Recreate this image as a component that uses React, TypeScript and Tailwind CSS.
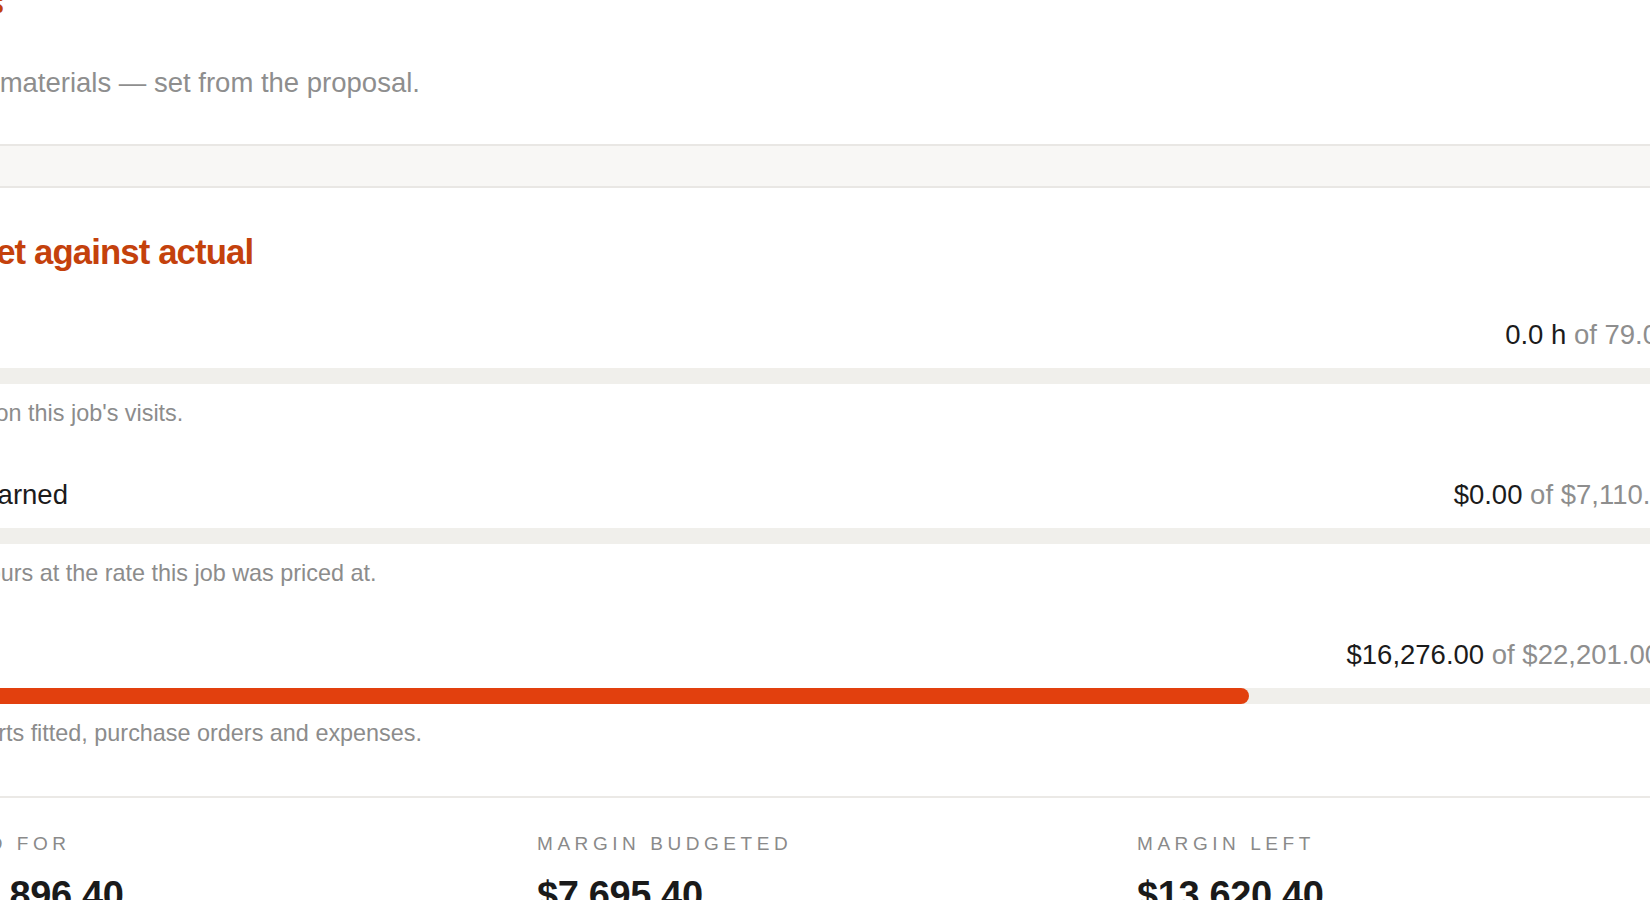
import React from "react";

type Row = {
  label: string;
  actual: string;
  budget: string;
  hint: string;
  fill: string;
  flag?: boolean;
};

const rows: Row[] = [
  {
    label: "Hours",
    actual: "0.0 h",
    budget: "79.0 h",
    hint: "Logged on this job's visits.",
    fill: "w-0",
  },
  {
    label: "Work earned",
    actual: "$0.00",
    budget: "$7,110.00",
    hint: "Billed hours at the rate this job was priced at.",
    fill: "w-0",
  },
  {
    label: "Costs",
    actual: "$16,276.00",
    budget: "$22,201.00",
    hint: "Shop parts fitted, purchase orders and expenses.",
    fill: "w-[75.6%]",
    flag: true,
  },
];

const stats = [
  { label: "SOLD FOR", value: "$29,896.40" },
  { label: "MARGIN BUDGETED", value: "$7,695.40" },
  { label: "MARGIN LEFT", value: "$13,620.40" },
];

function BudgetRow({ row }: { row: Row }) {
  return (
    <div className="flex flex-col">
      <div className="flex h-[36px] items-baseline justify-between text-[27.5px] leading-[36px]">
        <span className="text-[#1b1b1b]">{row.label}</span>
        <span className="flex items-center whitespace-nowrap">
          <span className="text-[#1b1b1b]">{row.actual}</span>
          <span className="whitespace-pre text-[#8e8e8e]"> of {row.budget}</span>
          {row.flag ? <span className="ml-[12px] h-[9px] w-[9px] rounded-full bg-[#e2400e]" /> : null}
        </span>
      </div>
      <div className="mt-[15px] h-4 w-full rounded-full bg-[#f0efeb]">
        <div className={`h-4 rounded-full bg-[#e2400e] ${row.fill}`} />
      </div>
      <div className="mt-[13px] text-[23.4px] leading-[32px] text-[#8c8c8c]">{row.hint}</div>
    </div>
  );
}

export default function App() {
  return (
    <div className="relative h-[900px] w-[1650px] overflow-hidden bg-white font-['Liberation_Sans',Arial,sans-serif]">
      <div className="ml-[-89px] flex w-[1770px] flex-col">
        <h1 className="mt-[-18px] h-[40px] text-[34px] font-bold leading-[40px] tracking-[-0.01em] text-[#c4410c]">
          Costs
        </h1>
        <p className="mt-[41px] h-[40px] text-[27.5px] leading-[40px] text-[#8e8e8e]">
          Hours, materials — set from the proposal.
        </p>
        <div className="mt-[41px] h-[44px] w-full border-y-2 border-[#e9e7e4] bg-[#f8f7f5]" />
        <h2 className="mt-[44px] h-[40px] text-[34.7px] font-bold leading-[40px] tracking-[-0.025em] text-[#c4410c]">
          Budget against actual
        </h2>
        <div className="mt-[45px] flex flex-col gap-[48px]">
          {rows.map((r) => (
            <BudgetRow key={r.label} row={r} />
          ))}
        </div>
        <div className="mt-[47px] h-0 w-full border-t-2 border-[#ebe9e6]" />
        <div className="ml-[26px] grid grid-cols-[600px_600px_600px]">
          {stats.map((s) => (
            <div key={s.label} className="flex flex-col">
              <div className="mt-[34px] h-[24px] text-[19px] leading-[24px] tracking-[0.24em] text-[#8a8a8a]">
                {s.label}
              </div>
              <div className="mt-[17px] h-[44px] text-[38px] font-bold leading-[44px] tracking-[-0.01em] text-[#1a1a1a]">
                {s.value}
              </div>
            </div>
          ))}
        </div>
      </div>
    </div>
  );
}
